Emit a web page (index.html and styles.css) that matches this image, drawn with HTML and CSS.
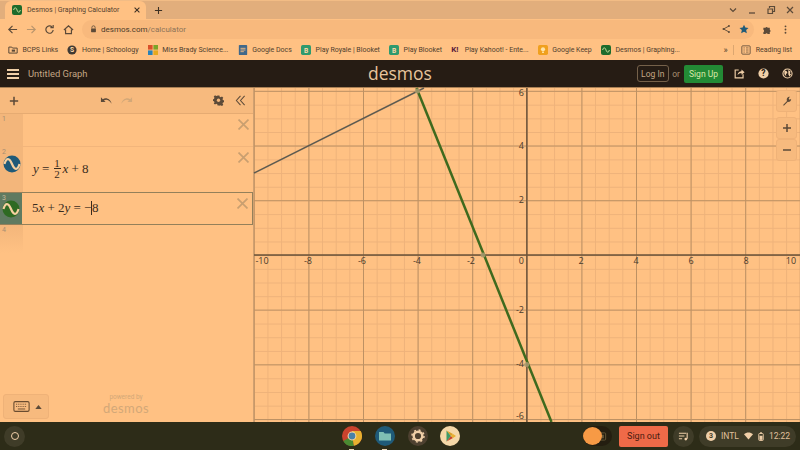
FILE: index.html
```html
<!DOCTYPE html>
<html>
<head>
    <title>Desmos | Graphing Calculator</title>
    <meta name="viewport" content="width=device-width, initial-scale=1">
    <link rel="stylesheet" href="styles.css">
</head>
<body>
    <header class="tabstrip">
        <div class="tab">
            <svg class="favicon" viewBox="0 0 12 12"><rect width="12" height="12" rx="2.5" fill="#1d6b2c"/><path d="M2 6c1-4 3-3 4 0s3 4 4 0" fill="none" stroke="#c9e0a0" stroke-width="1.2"/></svg>
            <span class="tab-title">Desmos | Graphing Calculator</span>
            <svg class="tab-close" viewBox="0 0 10 10"><path d="M2 2l6 6M8 2l-6 6" stroke="#3c3024" stroke-width="1.3"/></svg>
        </div>
        <svg class="new-tab" viewBox="0 0 10 10"><path d="M5 1v8M1 5h8" stroke="#3c3024" stroke-width="1.2"/></svg>
        <div class="window-controls">
            <svg viewBox="0 0 10 10"><path d="M2 3.5l3 3 3-3" fill="none" stroke="#5c4a38" stroke-width="1.2"/></svg>
            <svg viewBox="0 0 10 10"><path d="M2 8h6" stroke="#5c4a38" stroke-width="1.3"/></svg>
            <svg viewBox="0 0 10 10"><path d="M2 4h4.500v4.500h-4.500zM3.500 3V1.500H8.500V6.500H7" fill="none" stroke="#5c4a38" stroke-width="1.2"/></svg>
            <svg viewBox="0 0 10 10"><path d="M2 2l6 6M8 2l-6 6" stroke="#5c4a38" stroke-width="1.2"/></svg>
        </div>
    </header>

    <nav class="toolbar">
        <svg class="nav-icon" viewBox="0 0 12 12"><path d="M11 6H2M6 2L2 6l4 4" fill="none" stroke="#5c4a38" stroke-width="1.3"/></svg>
        <svg class="nav-icon" viewBox="0 0 12 12"><path d="M1 6h9M6 2l4 4-4 4" fill="none" stroke="#b8946c" stroke-width="1.3"/></svg>
        <svg class="nav-icon" viewBox="0 0 12 12"><path d="M10 6.500A4 4 0 1 1 8.800 3.200M10 1v3H7" fill="none" stroke="#5c4a38" stroke-width="1.3"/></svg>
        <svg class="nav-icon" viewBox="0 0 12 12"><path d="M1 6.500L6 2l5 4.500M2.800 6v4.500h6.400V6" fill="none" stroke="#5c4a38" stroke-width="1.3"/></svg>
        <div class="omnibox">
            <svg class="lock" viewBox="0 0 8 10"><path d="M2 4.500V3a2 2 0 0 1 4 0v1.500" fill="none" stroke="#5c4a38"/><rect x="1" y="4.500" width="6" height="4.500" rx=".6" fill="#5c4a38"/></svg>
            <span class="url-host">desmos.com</span><span class="url-path">/calculator</span>
            <div class="omni-icons">
                <svg viewBox="0 0 12 12"><path d="M9.500 2.500L3 6l6.500 3.500" fill="none" stroke="#5c4a38" stroke-width="1.100"/><circle cx="9.500" cy="2.500" r="1.200" fill="#5c4a38"/><circle cx="3" cy="6" r="1.200" fill="#5c4a38"/><circle cx="9.500" cy="9.500" r="1.200" fill="#5c4a38"/></svg>
                <svg viewBox="0 0 12 12"><path d="M6 .8l1.600 3.500 3.800.4-2.800 2.600.8 3.800L6 9.200l-3.400 1.900.8-3.800L.6 4.700l3.800-.4z" fill="#1f5a78"/></svg>
            </div>
        </div>
        <svg class="nav-icon" viewBox="0 0 12 12"><path d="M1.500 4h2.300a1.300 1.300 0 0 1 2.400 0h2.300v2.300a1.300 1.300 0 0 1 0 2.400V11H6.200a1.300 1.300 0 0 0-2.400 0H1.500V8.700a1.300 1.300 0 0 0 0-2.400z" fill="#5c4a38"/></svg>
        <svg class="nav-icon" viewBox="0 0 12 12"><circle cx="6" cy="2.500" r="1" fill="#5c4a38"/><circle cx="6" cy="6" r="1" fill="#5c4a38"/><circle cx="6" cy="9.500" r="1" fill="#5c4a38"/></svg>
    </nav>

    <nav class="bookmarks">
        <div class="bookmark">
            <svg viewBox="0 0 12 12"><path d="M1 2.500h3.500l1 1.200H11v6H1z" fill="none" stroke="#5c4a38" stroke-width="1.200"/><rect x="4.500" y="5.500" width="4" height="2.500" fill="#5c4a38"/></svg>
            <span>BCPS Links</span>
        </div>
        <div class="bookmark">
            <svg viewBox="0 0 12 12"><circle cx="6" cy="6" r="5.500" fill="#3f3a33"/><text x="6" y="8.600" class="fav-letter">S</text></svg>
            <span>Home | Schoology</span>
        </div>
        <div class="bookmark">
            <svg viewBox="0 0 12 12"><rect width="5.500" height="5.500" fill="#d9502a"/><rect x="6.500" width="5.500" height="5.500" fill="#7ba428"/><rect y="6.500" width="5.500" height="5.500" fill="#2b82b8"/><rect x="6.500" y="6.500" width="5.500" height="5.500" fill="#e8a81c"/></svg>
            <span>Miss Brady Science...</span>
        </div>
        <div class="bookmark">
            <svg viewBox="0 0 12 12"><rect x="1" width="10" height="12" rx="1" fill="#40688a"/><path d="M3 4h6M3 6h6M3 8h4" stroke="#ffc183"/></svg>
            <span>Google Docs</span>
        </div>
        <div class="bookmark">
            <svg viewBox="0 0 12 12"><rect width="12" height="12" rx="2" fill="#2f9a6e"/><text x="6" y="9.200" class="fav-letter">B</text></svg>
            <span>Play Royale | Blooket</span>
        </div>
        <div class="bookmark">
            <svg viewBox="0 0 12 12"><rect width="12" height="12" rx="2" fill="#2f9a6e"/><text x="6" y="9.200" class="fav-letter">B</text></svg>
            <span>Play Blooket</span>
        </div>
        <div class="bookmark">
            <span class="kahoot">K!</span>
            <span>Play Kahoot! - Ente...</span>
        </div>
        <div class="bookmark">
            <svg viewBox="0 0 12 12"><rect width="12" height="12" rx="2" fill="#f0a01e"/><circle cx="6" cy="5.200" r="2.500" fill="#ffe3a8"/><rect x="4.800" y="8" width="2.400" height="1.500" fill="#ffe3a8"/></svg>
            <span>Google Keep</span>
        </div>
        <div class="bookmark">
            <svg viewBox="0 0 12 12"><rect width="12" height="12" rx="2.500" fill="#1d6b2c"/><path d="M2 6c1-4 3-3 4 0s3 4 4 0" fill="none" stroke="#c9e0a0" stroke-width="1.200"/></svg>
            <span>Desmos | Graphing...</span>
        </div>
        <div class="bookmark-end">
            <span class="more">»</span>
            <svg viewBox="0 0 12 12"><rect x="1" y="1" width="10" height="10" rx="1" fill="none" stroke="#5c4a38"/><path d="M3 3.500h1.500M3 6h1.500M3 8.500h1.500M6 3.500h3M6 6h3M6 8.500h3" stroke="#5c4a38" stroke-width=".8"/></svg>
            <span>Reading list</span>
        </div>
    </nav>

    <header class="app-header">
        <div class="hamburger"><i></i><i></i><i></i></div>
        <span class="graph-title">Untitled Graph</span>
        <span class="logo">desmos</span>
        <div class="account">
            <span class="btn-login">Log In</span>
            <span class="or">or</span>
            <span class="btn-signup">Sign Up</span>
            <svg class="header-icon" viewBox="0 0 14 14"><path d="M6 2.500H1.500v10h10V8" fill="none" stroke="#f0cfa8" stroke-width="1.500"/><path d="M4.500 9c.3-3 2.500-4.800 5-4.800V2l4 3.300-4 3.300V6.300C7.500 6.300 6 7.300 4.500 9z" fill="#f0cfa8"/></svg>
            <svg class="header-icon" viewBox="0 0 14 14"><circle cx="7" cy="7" r="6.500" fill="#f0cfa8"/><text x="7" y="10.500" class="help-mark">?</text></svg>
            <svg class="header-icon" viewBox="0 0 14 14"><circle cx="7" cy="7" r="5.800" fill="none" stroke="#f0cfa8" stroke-width="1.400"/><path d="M3 3l3 1 1 2.500-2 1 .5 3L3 8zM8 2.500l3 2-1 2.500 1.500 1-2 3L8 8z" fill="#f0cfa8"/></svg>
        </div>
    </header>

    <main class="calculator">
        <section class="expressions">
            <div class="expr-top">
                <svg class="plus" viewBox="0 0 12 12"><path d="M6 1v10M1 6h10" stroke="#5c4a38" stroke-width="1.800"/></svg>
                <div class="undo-redo">
                    <svg viewBox="0 0 14 10"><path d="M1 1v5h5L4.300 4.400C6.500 3 10 3.600 12.500 8 11.500 3.200 6.800.6 3 3z" fill="#5c4a38"/></svg>
                    <svg viewBox="0 0 14 10"><path d="M13 1v5H8l1.700-1.600C7.500 3 4 3.600 1.500 8 2.500 3.200 7.200.6 11 3z" fill="#d3a878"/></svg>
                </div>
                <svg class="gear" viewBox="0 0 12 12"><path d="M5 .5h2l.3 1.500 1.200.5 1.300-.8 1.400 1.400-.8 1.300.5 1.200 1.500.3v2l-1.500.3-.5 1.200.8 1.300-1.400 1.400-1.300-.8-1.200.5L7 11.500H5l-.3-1.500-1.200-.5-1.300.8L.8 9.400l.8-1.300-.5-1.200L-.4 6.600v-2L1.100 4.300l.5-1.200L.8 1.800 2.200.4l1.300.8 1.200-.5z" fill="#5c4a38"/><circle cx="6" cy="5.700" r="1.800" fill="#f5b87c"/></svg>
                <svg class="collapse" viewBox="0 0 12 12"><path d="M6 1L1.500 6 6 11M10.500 1L6 6l4.500 5" fill="none" stroke="#5c4a38" stroke-width="1.100"/></svg>
            </div>

            <div class="expr-row expr-empty">
                <div class="gutter"><span class="index">1</span></div>
                <div class="expr-body"></div>
                <svg class="remove" viewBox="0 0 10 10"><path d="M.5.5l9 9M9.500.5l-9 9" stroke="#c99f70" stroke-width="1.500"/></svg>
            </div>

            <div class="expr-row expr-tall">
                <div class="gutter">
                    <span class="index">2</span>
                    <svg class="swatch" viewBox="0 0 18 18"><circle cx="9" cy="9" r="8.500" fill="#1f5a78"/><path d="M1.500 9c2-7 5-6 7.500 0s5.500 7 7.500 0" fill="none" stroke="#f5d0a0" stroke-width="2.200"/></svg>
                </div>
                <div class="expr-body math">
                    <i>y</i><span class="op">=</span>
                    <span class="frac"><span>1</span><span class="frac-bottom">2</span></span>
                    <i>x</i><span class="op">+</span>8
                </div>
                <svg class="remove" viewBox="0 0 10 10"><path d="M.5.5l9 9M9.500.5l-9 9" stroke="#c99f70" stroke-width="1.500"/></svg>
            </div>

            <div class="expr-row expr-selected">
                <div class="gutter">
                    <span class="index">3</span>
                    <svg class="swatch" viewBox="0 0 18 18"><circle cx="9" cy="9" r="8.500" fill="#2e6a22"/><path d="M1.500 9c2-7 5-6 7.500 0s5.500 7 7.500 0" fill="none" stroke="#f5d0a0" stroke-width="2.200"/></svg>
                </div>
                <div class="expr-body math">
                    5<i>x</i><span class="op">+</span>2<i>y</i><span class="op">=</span><span class="minus">−</span><span class="cursor"></span>8
                </div>
                <svg class="remove" viewBox="0 0 10 10"><path d="M.5.5l9 9M9.500.5l-9 9" stroke="#c99f70" stroke-width="1.500"/></svg>
            </div>

            <div class="expr-row expr-last">
                <div class="gutter"><span class="index">4</span></div>
            </div>

            <div class="expr-footer">
                <div class="keyboard">
                    <svg viewBox="0 0 18 12"><rect x=".7" y=".7" width="16.600" height="10.600" rx="1.500" fill="none" stroke="#6a4c30" stroke-width="1.200"/><path d="M3 3.500h12M3 6h12" stroke="#6a4c30" stroke-dasharray="1 1"/><path d="M5 8.700h8" stroke="#6a4c30"/></svg>
                    <svg class="caret" viewBox="0 0 8 5"><path d="M4 0l4 5H0z" fill="#5c4a38"/></svg>
                </div>
                <div class="powered">
                    <span class="powered-by">powered by</span>
                    <span class="powered-logo">desmos</span>
                </div>
            </div>
        </section>

        <section class="graph">
            <svg class="graph-paper" viewBox="0 0 546 334">
                <defs>
                    <pattern id="minor" x="-0.200" y="3" width="13.650" height="13.680" patternUnits="userSpaceOnUse">
                        <path d="M.5 0v14M0 .5h14" fill="none" stroke="#eeb27a" stroke-width="1"/>
                    </pattern>
                    <pattern id="major" x="-0.200" y="2.800" width="54.600" height="54.700" patternUnits="userSpaceOnUse">
                        <path d="M.5 0v55M0 .5h55" fill="none" stroke="#bd9163" stroke-width="1"/>
                    </pattern>
                </defs>
                <rect width="546" height="334" fill="url(#minor)"/>
                <rect width="546" height="334" fill="url(#major)"/>
                <path d="M272.800 0v334M0 167h546" stroke="#6e543a" stroke-width="1.400"/>
                <path d="M0 85L170 0" stroke="#5f5b50" stroke-width="1.500"/>
                <path d="M162.500 0L297.500 334" stroke="#3f6a1e" stroke-width="2.500"/>
                <circle cx="163.400" cy="2.900" r="2.500" fill="#a89a70" opacity=".85"/>
                <circle cx="229" cy="167" r="2.500" fill="#a89a70" opacity=".85"/>
                <circle cx="272.800" cy="276.400" r="2.500" fill="#a89a70" opacity=".85"/>
                <g class="tick-x">
                    <text x="8" y="176">-10</text>
                    <text x="54" y="176">-8</text>
                    <text x="108" y="176">-6</text>
                    <text x="163" y="176">-4</text>
                    <text x="217" y="176">-2</text>
                    <text x="327" y="176">2</text>
                    <text x="382" y="176">4</text>
                    <text x="437" y="176">6</text>
                    <text x="492" y="176">8</text>
                    <text x="537" y="176">10</text>
                </g>
                <g class="tick-y">
                    <text x="270" y="176">0</text>
                    <text x="270" y="8">6</text>
                    <text x="270" y="60.500">4</text>
                    <text x="270" y="114.500">2</text>
                    <text x="270" y="224.500">-2</text>
                    <text x="270" y="278.500">-4</text>
                    <text x="270" y="330.500">-6</text>
                </g>
            </svg>
            <div class="graph-tools">
                <div class="tool-btn">
                    <svg viewBox="0 0 12 12"><path d="M1 11l5-5C5 3.500 6.500 1 9.500 1L8 3l1 1.500L11 3.500C11 6.500 8.500 7.500 7 7l-4.500 4.500z" fill="#5c4a38"/></svg>
                </div>
                <div class="zoom-btns">
                    <div class="tool-btn">
                        <svg viewBox="0 0 10 10"><path d="M5 1v8M1 5h8" stroke="#5c4a38" stroke-width="1.500"/></svg>
                    </div>
                    <div class="tool-btn">
                        <svg viewBox="0 0 10 10"><path d="M1 5h8" stroke="#5c4a38" stroke-width="1.500"/></svg>
                    </div>
                </div>
            </div>
        </section>
    </main>

    <footer class="shelf">
        <div class="launcher"><i></i></div>
        <div class="pinned">
            <div class="pin pin-open">
                <svg viewBox="0 0 20 20"><circle cx="10" cy="10" r="10" fill="#c9432e"/><path d="M10 10L1.300 15A10 10 0 0 0 12 19.800z" fill="#4a8a32"/><path d="M10 10l2 9.800A10 10 0 0 0 18.700 5H10z" fill="#e8b030"/><circle cx="10" cy="10" r="4.400" fill="#ffd9a8"/><circle cx="10" cy="10" r="3.400" fill="#4a80a8"/></svg>
            </div>
            <div class="pin pin-open">
                <svg viewBox="0 0 20 20"><circle cx="10" cy="10" r="10" fill="#1f5a78"/><path d="M4 6h4.500l1.200 1.500H16v7H4z" fill="#7fc0b4"/></svg>
            </div>
            <div class="pin">
                <svg viewBox="0 0 20 20"><circle cx="10" cy="10" r="10" fill="#4d4030"/><circle cx="10" cy="10" r="4.300" fill="none" stroke="#f0cfa8" stroke-width="2.400"/><circle cx="10" cy="10" r="6" fill="none" stroke="#f0cfa8" stroke-width="1.500" stroke-dasharray="2 2.700"/></svg>
            </div>
            <div class="pin">
                <svg viewBox="0 0 20 20"><circle cx="10" cy="10" r="10" fill="#f5d8a8"/><path d="M6.500 4.500L11 10l-4.500 5.500z" fill="#3f9a68"/><path d="M6.500 4.500L13 8l-2 2z" fill="#d9a028"/><path d="M6.500 15.500L13 12l-2-2z" fill="#c9432e"/><path d="M13 8l3 2-3 2-2-2z" fill="#e8b030"/></svg>
            </div>
        </div>
        <div class="tray">
            <div class="capture">
                <span class="capture-dot"></span>
                <svg viewBox="0 0 10 10"><rect x="1.500" y="1" width="7" height="8" rx="1" fill="none" stroke="#6a5a3a"/><rect x="3.500" y="3" width="3" height="4" fill="#6a5a3a"/></svg>
            </div>
            <span class="sign-out">Sign out</span>
            <div class="tray-round">
                <svg viewBox="0 0 12 12"><path d="M1 2.500h8M1 5.500h6M1 8.500h3.500" stroke="#f0cfa8" stroke-width="1.200"/><path d="M10 2v6.500" stroke="#f0cfa8" stroke-width="1.200"/><circle cx="8.500" cy="8.800" r="1.500" fill="#f0cfa8"/></svg>
            </div>
            <div class="status">
                <span class="ime-badge">3</span>
                <span>INTL</span>
                <svg viewBox="0 0 12 10"><path d="M0 2.500C3.500-.6 8.500-.6 12 2.500L6 9.500z" fill="#f0cfa8"/></svg>
                <svg class="battery" viewBox="0 0 8 12"><rect x="1" y="2" width="6" height="9.300" rx="1" fill="none" stroke="#f0cfa8" stroke-width="1.200"/><rect x="2.800" y=".3" width="2.400" height="1.500" fill="#f0cfa8"/><rect x="2" y="5" width="4" height="5.500" fill="#f0cfa8"/></svg>
                <span>12:22</span>
            </div>
        </div>
    </footer>
</body>
</html>
```

FILE: styles.css
```css
* {
    margin: 0;
    padding: 0;
    box-sizing: border-box;
}

html, body {
    width: 800px;
    height: 450px;
    overflow: hidden;
}

body {
    background: #ffc183;
    color: #4a3a2a;
    font-family: Roboto, 'Liberation Sans', sans-serif;
    display: flex;
    flex-direction: column;
}

svg {
    display: block;
    flex: none;
}

/* browser chrome */
.tabstrip {
    height: 19px;
    background: #e2ae7c;
    display: flex;
    align-items: flex-end;
    padding-left: 5px;
    border-top: 1px solid #f2bc85;
}

.tab {
    width: 141px;
    height: 18px;
    background: #ffc183;
    border-radius: 6px 6px 0 0;
    display: flex;
    align-items: center;
    padding: 0 5px 0 7px;
    gap: 5px;
}

.favicon {
    width: 10px;
    height: 10px;
}

.tab-title {
    font-size: 7px;
    color: #53422f;
    flex: 1;
    white-space: nowrap;
}

.tab-close {
    width: 8px;
    height: 8px;
}

.new-tab {
    width: 9px;
    height: 9px;
    margin: 0 0 4px 8px;
}

.window-controls {
    margin-left: auto;
    display: flex;
    gap: 9px;
    padding: 0 5px 4px 0;
}

.window-controls svg {
    width: 10px;
    height: 10px;
}

.toolbar {
    height: 20px;
    display: flex;
    align-items: center;
    padding-left: 7px;
    gap: 7.500px;
}

.nav-icon {
    width: 11px;
    height: 11px;
}

.omnibox {
    width: 672px;
    flex: none;
    height: 19px;
    background: #f8b97d;
    border-radius: 10px;
    display: flex;
    align-items: center;
    padding-left: 8px;
    margin-left: 1px;
    font-size: 8px;
}

.lock {
    width: 7px;
    height: 8px;
    margin-right: 4px;
}

.url-host {
    color: #4a3a2a;
}

.url-path {
    color: #8d7358;
}

.omni-icons {
    margin-left: auto;
    display: flex;
    gap: 8px;
    padding-right: 5px;
}

.omni-icons svg {
    width: 10px;
    height: 10px;
}

.bookmarks {
    height: 21px;
    display: flex;
    align-items: center;
    padding-left: 8px;
    font-size: 7px;
    color: #4f3e2d;
    white-space: nowrap;
}

.bookmark {
    display: flex;
    align-items: center;
    gap: 4.500px;
    margin-right: 9.200px;
}

.bookmark svg {
    width: 10px;
    height: 10px;
}

.fav-letter {
    font-size: 8px;
    font-weight: 700;
    fill: #ffd9a8;
    text-anchor: middle;
}

.kahoot {
    color: #5a1c3c;
    font-weight: 700;
    font-size: 8px;
    width: 9px;
}

.bookmark-end {
    margin-left: auto;
    display: flex;
    align-items: center;
    gap: 5px;
    padding-right: 8px;
}

.bookmark-end svg {
    width: 10px;
    height: 10px;
}

.more {
    font-size: 9px;
    padding-right: 5px;
    margin-right: 2px;
    border-right: 1px solid #dca670;
}

/* desmos header */
.app-header {
    height: 27px;
    background: #261c14;
    display: flex;
    align-items: center;
    padding-left: 7px;
    position: relative;
}

.hamburger {
    width: 12px;
    display: flex;
    flex-direction: column;
    gap: 2px;
    margin-right: 9px;
}

.hamburger i {
    height: 2px;
    background: #f0cfa8;
}

.graph-title {
    font-size: 9.400px;
    color: #c4a684;
}

.logo {
    position: absolute;
    left: 368px;
    top: 1px;
    font-size: 17.500px;
    color: #e8c49c;
    font-family: 'Open Sans', sans-serif;
}

.account {
    margin-left: auto;
    display: flex;
    align-items: center;
    padding-right: 7px;
}

.btn-login {
    width: 32px;
    height: 17px;
    border: 1px solid #75614a;
    border-radius: 3px;
    font-size: 8.500px;
    color: #c4a684;
    display: flex;
    align-items: center;
    justify-content: center;
}

.or {
    font-size: 8.500px;
    color: #a88f72;
    margin: 0 4px 0 3.500px;
}

.btn-signup {
    width: 39px;
    height: 18px;
    background: #238a35;
    border-radius: 2px;
    font-size: 8.500px;
    color: #d8e8a8;
    display: flex;
    align-items: center;
    justify-content: center;
    margin-right: 11px;
}

.header-icon {
    width: 11px;
    height: 11px;
    margin-right: 13px;
}

.header-icon:last-child {
    margin-right: 0;
}

.help-mark {
    font-size: 11px;
    font-weight: 700;
    fill: #261c14;
    text-anchor: middle;
}

/* calculator */
.calculator {
    height: 335px;
    display: flex;
    border-top: 1px solid #a98055;
}

.expressions {
    width: 254px;
    border-right: 1px solid #d0a070;
    display: flex;
    flex-direction: column;
}

.expr-top {
    height: 26px;
    background: #f7ba7e;
    border-bottom: 1px solid #e6ab72;
    display: flex;
    align-items: center;
    padding-left: 9px;
}

.plus {
    width: 10px;
    height: 10px;
}

.undo-redo {
    display: flex;
    gap: 7px;
    margin-left: 81px;
}

.undo-redo svg {
    width: 13px;
    height: 10px;
}

.gear {
    width: 11px;
    height: 11px;
    margin-left: 80px;
}

.collapse {
    width: 11px;
    height: 11px;
    margin-left: 11px;
}

.expr-row {
    display: flex;
    position: relative;
    border-bottom: 1px solid #f2b57b;
}

.expr-empty {
    height: 33px;
}

.expr-tall {
    height: 45px;
    border-bottom: 0;
}

.expr-selected {
    height: 33px;
    border: 1px solid #94805a;
    border-left: 0;
    border-width: 1.500px 1px 1.500px 0;
}

.expr-last {
    height: 28px;
    border-bottom: 0;
}

.gutter {
    width: 23px;
    background: #f3b67b;
    flex: none;
    display: flex;
    align-items: center;
    justify-content: center;
}

.expr-selected .gutter {
    width: 22px;
    background: #5f7a60;
}

.expr-last .gutter {
    background: linear-gradient(#f3b67b, #ffc183);
}

.index {
    position: absolute;
    left: 2px;
    top: 1px;
    font-size: 7px;
    color: #a88f72;
}

.expr-selected .index {
    color: #c4b898;
}

.swatch {
    width: 18px;
    height: 18px;
    margin-top: 1px;
}

.expr-tall .swatch {
    margin: 0 0 12px;
}

.expr-body {
    flex: 1;
}

.math {
    display: flex;
    align-items: center;
    padding: 0 0 2px 10px;
    font-family: 'Liberation Serif', serif;
    font-size: 13px;
    color: #3a2c1e;
}

.op {
    margin: 0 3.200px;
}

.frac {
    display: flex;
    flex-direction: column;
    align-items: center;
    font-size: 11px;
    line-height: 10.500px;
    width: 7px;
    margin: 0 2px 0 1px;
}

.frac-bottom {
    border-top: 1px solid #3a2c1e;
    width: 100%;
    text-align: center;
}

.minus {
    width: 7px;
}

.cursor {
    width: 1px;
    height: 14px;
    background: #3a2c1e;
}

.remove {
    position: absolute;
    right: 4px;
    top: 5px;
    width: 11px;
    height: 11px;
}

.expr-footer {
    flex: 1;
    position: relative;
}

.keyboard {
    position: absolute;
    left: 3px;
    bottom: 3px;
    width: 46px;
    height: 25px;
    background: #f7ba7e;
    border: 1px solid #efb278;
    border-radius: 3px;
    display: flex;
    align-items: center;
    padding-left: 9px;
    gap: 5px;
}

.keyboard svg {
    width: 17px;
    height: 11px;
}

.keyboard .caret {
    width: 7px;
    height: 4px;
}

.powered {
    position: absolute;
    left: 103px;
    bottom: 7px;
    width: 46px;
    display: flex;
    flex-direction: column;
    align-items: center;
    color: #d3a878;
}

.powered-by {
    font-size: 6.500px;
    line-height: 8px;
}

.powered-logo {
    font-family: Lato, sans-serif;
    font-size: 13px;
    line-height: 14px;
    margin-top: .500px;
    letter-spacing: .4px;
}

.graph {
    flex: 1;
    position: relative;
}

.graph-paper {
    width: 546px;
    height: 334px;
    overflow: visible;
}

.graph-paper text {
    font-family: 'Open Sans', 'Liberation Sans', sans-serif;
    font-size: 9px;
    fill: #4a3a2a;
}

.tick-x text {
    text-anchor: middle;
}

.tick-y text {
    text-anchor: end;
}

.graph-tools {
    position: absolute;
    right: 3px;
    top: 2px;
    display: flex;
    flex-direction: column;
    gap: 5px;
}

.tool-btn {
    width: 21px;
    height: 22px;
    background: #f7ba7e;
    border: 1px solid #efb278;
    border-radius: 3px;
    display: flex;
    align-items: center;
    justify-content: center;
}

.tool-btn svg {
    width: 10px;
    height: 10px;
}

/* chromeos shelf */
.shelf {
    height: 28px;
    background: #2d2c18;
    display: flex;
    align-items: center;
    position: relative;
    padding-left: 4px;
}

.launcher {
    width: 21px;
    height: 21px;
    border-radius: 50%;
    background: #3f3c28;
    display: flex;
    align-items: center;
    justify-content: center;
}

.launcher i {
    width: 8px;
    height: 8px;
    border: 1.500px solid #f0cfa8;
    border-radius: 50%;
}

.pinned {
    position: absolute;
    left: 342px;
    top: 4px;
    display: flex;
    gap: 12.800px;
}

.pin {
    width: 20px;
    height: 24px;
    position: relative;
}

.pin svg {
    width: 20px;
    height: 20px;
}

.pin-open::after {
    content: "";
    position: absolute;
    left: 7px;
    bottom: 0;
    width: 5px;
    height: 1px;
    background: #e8d0b0;
}

.tray {
    margin-left: auto;
    display: flex;
    align-items: center;
    padding-right: 4px;
}

.capture {
    width: 29px;
    height: 20px;
    border-radius: 10px;
    background: #241e10;
    position: relative;
    display: flex;
    align-items: center;
    justify-content: flex-end;
    padding-right: 5px;
    margin-right: 7px;
}

.capture svg {
    width: 9px;
    height: 9px;
}

.capture-dot {
    position: absolute;
    left: 0;
    top: 1px;
    width: 19px;
    height: 18px;
    border-radius: 50%;
    background: #f79a45;
}

.sign-out {
    width: 49px;
    height: 21px;
    background: #ef6a48;
    border-radius: 2px;
    font-size: 9px;
    color: #4a1c10;
    display: flex;
    align-items: center;
    justify-content: center;
    margin-right: 5px;
}

.tray-round {
    width: 21px;
    height: 21px;
    border-radius: 50%;
    background: #3f3c28;
    display: flex;
    align-items: center;
    justify-content: center;
    margin-right: 5px;
}

.tray-round svg {
    width: 11px;
    height: 11px;
}

.status {
    width: 97px;
    height: 21px;
    border-radius: 11px;
    background: #3f3c28;
    color: #e0c09c;
    font-size: 8.500px;
    display: flex;
    align-items: center;
    padding-left: 7px;
    gap: 5px;
}

.status svg {
    width: 9px;
    height: 8px;
}

.status .battery {
    width: 6px;
    height: 9px;
}

.ime-badge {
    width: 10px;
    height: 10px;
    border-radius: 50%;
    background: #f0cfa8;
    color: #3f3c28;
    font-size: 7px;
    font-weight: 700;
    text-align: center;
    line-height: 10px;
}
```
